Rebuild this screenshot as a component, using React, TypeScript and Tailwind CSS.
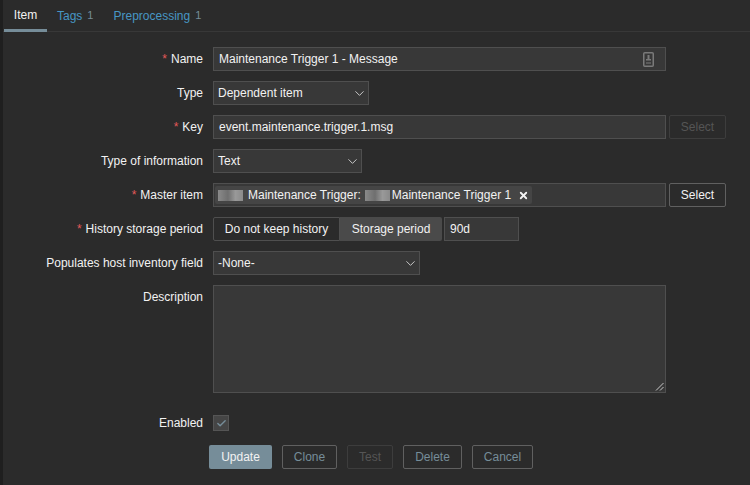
import { ChevronDown, Check, X } from "lucide-react";

const inputClass = "h-6 border border-[#4f4f4f] bg-[#383838] text-[#f2f2f2] text-xs flex items-center px-[4px]";

const Row = ({ label, required, children }: { label: string; required?: boolean; children: React.ReactNode }) => (
  <div className="flex items-start gap-[10px]">
    <div className="w-[203px] shrink-0 h-6 flex items-center justify-end text-xs text-[#f2f2f2]">
      {required && <span className="text-[#e45959] mr-1">*</span>}
      {label}
    </div>
    {children}
  </div>
);

const Dropdown = ({ value, width }: { value: string; width: string }) => (
  <div className={`${inputClass} justify-between ${width}`}>
    <span>{value}</span>
    <ChevronDown size={15} strokeWidth={1.5} className="text-[#d0d0d0] -mr-[3px]" />
  </div>
);

const Blur = ({ width }: { width: string }) => (
  <span className={`h-[11px] mr-[5px] blur-[0.7px] bg-[linear-gradient(90deg,#8a8a8a,#6f6f6f_40%,#999_70%,#8a8a8a)] ${width}`} />
);

const OutlineButton = ({ children, width, disabled }: { children: string; width: string; disabled?: boolean }) => (
  <div
    className={`h-6 border rounded-[2px] flex items-center justify-center text-xs ${width} ${
      disabled ? "border-[#3d3d3d] text-[#555555]" : "border-[#606060] text-[#768d99]"
    }`}
  >
    {children}
  </div>
);

export default function App() {
  return (
    <div className="w-[750px] h-[485px] overflow-hidden bg-[#2b2b2b] flex font-['Liberation_Sans',Arial,sans-serif]">
      <div className="w-[3px] shrink-0 bg-[#1f1f1f]" />
      <div className="flex-1 min-w-0">
        <div className="h-[32px] border-b border-[#383838] flex text-xs">
          <div className="ml-[1px] w-[43px] h-[32px] border-b-[3px] border-[#768d99] flex items-center justify-center text-[#f2f2f2] pt-[1px]">
            Item
          </div>
          <div className="ml-[10px] h-[31px] flex items-center text-[#4796c4]">
            Tags<span className="ml-[5px] text-[11px] text-[#768d99]">1</span>
          </div>
          <div className="ml-[20px] h-[31px] flex items-center text-[#4796c4]">
            Preprocessing<span className="ml-[5px] text-[11px] text-[#768d99]">1</span>
          </div>
        </div>

        <div className="-ml-[3px] pt-[15px] flex flex-col gap-[10px]">
          <Row label="Name" required>
            <div className={`${inputClass} w-[453px] justify-between !pl-[5px]`}>
              <span>Maintenance Trigger 1 - Message</span>
              <svg width="11" height="15" viewBox="0 0 11 15" className="mr-[7px]" fill="none">
                <rect x="0.75" y="0.75" width="9.5" height="13.5" rx="1" stroke="#7a7a7a" strokeWidth="1.5" />
                <rect x="4.5" y="3" width="2" height="4" fill="#7a7a7a" />
                <rect x="3" y="7" width="5" height="1.5" fill="#7a7a7a" />
                <rect x="3" y="10" width="5" height="2" fill="#5a5a5a" />
              </svg>
            </div>
          </Row>
          <Row label="Type">
            <Dropdown value="Dependent item" width="w-[156px]" />
          </Row>
          <Row label="Key" required>
            <div className="flex gap-[3px]">
              <div className={`${inputClass} w-[453px] !pl-[5px]`}>event.maintenance.trigger.1.msg</div>
              <OutlineButton width="w-[57px]" disabled>
                Select
              </OutlineButton>
            </div>
          </Row>
          <Row label="Type of information">
            <Dropdown value="Text" width="w-[149px]" />
          </Row>
          <Row label="Master item" required>
            <div className="flex gap-[3px]">
              <div className={`${inputClass} w-[453px] !px-[1px]`}>
                <div className="h-[18px] w-[317px] bg-[#454545] rounded-[2px] flex items-center pl-[3px] whitespace-nowrap">
                  <Blur width="w-[25px]" />
                  <span>Maintenance Trigger:</span>
                  <Blur width="w-[25px] ml-[4px] !mr-[2px]" />
                  <span>Maintenance Trigger 1</span>
                  <X size={11} strokeWidth={4} className="ml-[7px] text-[#f2f2f2]" />
                </div>
              </div>
              <div className="h-6 w-[57px] border border-[#606060] rounded-[2px] flex items-center justify-center text-xs text-[#f2f2f2]">
                Select
              </div>
            </div>
          </Row>
          <Row label="History storage period" required>
            <div className="flex gap-[2px]">
              <div className="flex h-6 text-xs text-[#f2f2f2]">
                <div className="w-[127px] border border-[#4f4f4f] rounded-l-[2px] bg-[#2b2b2b] flex items-center justify-center">
                  Do not keep history
                </div>
                <div className="w-[102px] bg-[#4a4a4a] rounded-r-[2px] flex items-center justify-center">
                  Storage period
                </div>
              </div>
              <div className={`${inputClass} w-[75px] !pl-[5px]`}>90d</div>
            </div>
          </Row>
          <Row label="Populates host inventory field">
            <Dropdown value="-None-" width="w-[207px]" />
          </Row>
          <Row label="Description">
            <div className="relative h-[108px] w-[453px] border border-[#4f4f4f] bg-[#383838]">
              <svg width="9" height="9" viewBox="0 0 9 9" className="absolute right-[1px] bottom-[1px]" stroke="#c8c8c8" strokeWidth="1">
                <path d="M1 8.5 8.5 1M5 8.5 8.5 5" />
              </svg>
            </div>
          </Row>
          <div className="mt-[8px]">
            <Row label="Enabled">
              <div className="h-6 flex items-center">
                <div className="w-4 h-4 border border-[#555555] bg-[#454545] flex items-center justify-center">
                  <Check size={11} strokeWidth={3} className="text-[#768d99]" />
                </div>
              </div>
            </Row>
          </div>
          <div className="flex gap-[10px] ml-[209px]">
            <div className="h-6 w-[63px] bg-[#768d99] rounded-[2px] flex items-center justify-center text-xs text-[#f2f2f2]">
              Update
            </div>
            <OutlineButton width="w-[55px]">Clone</OutlineButton>
            <OutlineButton width="w-[46px]" disabled>
              Test
            </OutlineButton>
            <OutlineButton width="w-[59px]">Delete</OutlineButton>
            <OutlineButton width="w-[61px]">Cancel</OutlineButton>
          </div>
        </div>
      </div>
    </div>
  );
}
